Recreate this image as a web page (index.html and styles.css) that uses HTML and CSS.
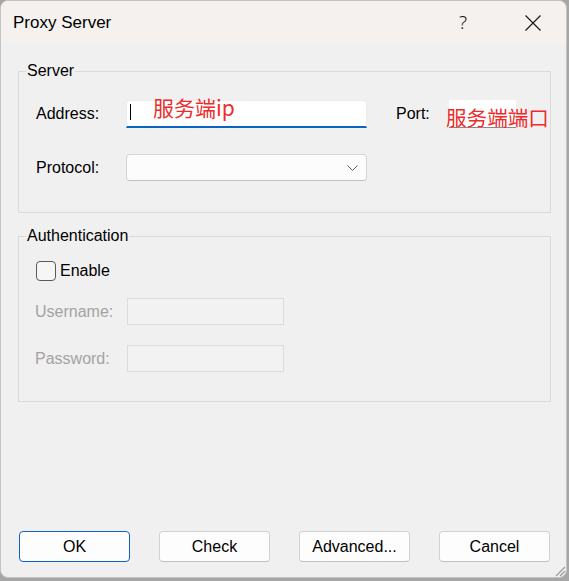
FILE: index.html
```html
<!DOCTYPE html>
<html lang="en">
<head>
<meta charset="utf-8">
<title>Proxy Server</title>
<link rel="stylesheet" href="styles.css">
</head>
<body>
<div class="window">
  <div class="titlebar">
    <span class="title">Proxy Server</span>
    <span class="cap-btn help">?</span>
    <span class="cap-btn close">
      <svg width="16" height="16" viewBox="0 0 16 16"><path d="M0.5 0.5 L15.5 15.5 M15.5 0.5 L0.5 15.5" stroke="#1a1a1a" stroke-width="1.2" fill="none"/></svg>
    </span>
  </div>
  <div class="content">
    <fieldset class="group server">
      <legend>Server</legend>
      <div class="row addr-row">
        <span class="lbl">Address:</span>
        <div class="edit address"><span class="caret"></span><span class="note note-ip">服务端ip</span></div>
        <span class="lbl port-lbl">Port:</span>
        <div class="edit port"><span class="note note-port">服务端端口</span></div>
      </div>
      <div class="row proto-row">
        <span class="lbl">Protocol:</span>
        <div class="combo">
          <svg class="chev" width="11" height="6" viewBox="0 0 11 6"><path d="M0.5 0.5 L5.5 5.5 L10.5 0.5" stroke="#5a5a5a" stroke-width="1" fill="none"/></svg>
        </div>
      </div>
    </fieldset>
    <fieldset class="group auth">
      <legend>Authentication</legend>
      <div class="check-row">
        <span class="checkbox"></span>
        <span class="check-text">Enable</span>
      </div>
      <div class="row dis-row user-row">
        <span class="lbl dis-lbl">Username:</span>
        <div class="edit disabled"></div>
      </div>
      <div class="row dis-row pass-row">
        <span class="lbl dis-lbl">Password:</span>
        <div class="edit disabled"></div>
      </div>
    </fieldset>
    <div class="buttons">
      <button class="btn default">OK</button>
      <button class="btn">Check</button>
      <button class="btn">Advanced...</button>
      <button class="btn">Cancel</button>
    </div>
  </div>
  <svg class="grip" width="12" height="12" viewBox="0 0 12 12"><path d="M11 2 L2 11 M11 6 L6 11 M11 10 L10 11" stroke="#9a9a9a" stroke-width="1.2" fill="none"/></svg>
</div>
</body>
</html>
```

FILE: styles.css
```css
html, body {
  margin: 0;
  padding: 0;
  background: #a6a6a6;
  width: 569px;
  height: 581px;
  overflow: hidden;
}

body {
  font-family: "Liberation Sans", "Noto Sans CJK SC", sans-serif;
  font-size: 16px;
  color: #000;
}

.window {
  position: relative;
  width: 565px;
  height: 576px;
  border: 1px solid #c4c4c4;
  border-radius: 8px;
  background: #f0f0f0;
  overflow: hidden;
  display: flex;
  flex-direction: column;
}

.titlebar {
  height: 43px;
  flex: none;
  background: #f4f1ee;
  display: flex;
  align-items: center;
  padding: 0 10px 0 12px;
}

.title {
  flex: 1;
  font-size: 17px;
  line-height: 20px;
  padding-top: 1px;
}

.cap-btn {
  width: 46px;
  height: 43px;
  display: flex;
  align-items: center;
  justify-content: center;
}

.help {
  font-family: "Noto Sans", sans-serif;
  font-weight: 300;
  font-size: 19px;
  color: #1a1a1a;
  margin-right: 24px;
  padding-bottom: 1px;
}

.close svg { display: block; }

.content {
  flex: 1;
  display: flex;
  flex-direction: column;
  padding: 17px 15px 15px 17px;
}

.group {
  margin: 0;
  border: 1px solid #dadada;
  padding: 0 0 0 7px;
  min-inline-size: 0;
}

.group legend {
  padding: 0 1px;
  font-size: 16px;
  line-height: 20px;
}

.row {
  display: flex;
  align-items: center;
  margin-left: 10px;
  position: relative;
}

.lbl {
  width: 90px;
  flex: none;
}

.server { padding-bottom: 31px; }
.addr-row { margin-top: 19px; height: 28px; }
.proto-row { margin-top: 26px; height: 27px; }

.edit {
  position: relative;
  box-sizing: border-box;
  background: #fff;
}

.address {
  width: 241px;
  height: 28px;
  border: 1px solid #ececec;
  border-bottom: 2px solid #0a64c0;
  border-radius: 4px 4px 0 0;
}

.caret {
  position: absolute;
  left: 3px;
  top: 3px;
  width: 1px;
  height: 16px;
  background: #000;
}

.port-lbl {
  width: 53px;
  margin-left: 29px;
}

.port {
  width: 67px;
  height: 28px;
  border-bottom: 1px solid #8a8a8a;
}

.note {
  position: absolute;
  white-space: nowrap;
  color: #ee2b2b;
  font-family: "Noto Sans CJK SC", sans-serif;
  line-height: 22px;
}

.note-ip {
  left: 26px;
  top: -5px;
  font-size: 21px;
}

.note-port {
  left: -3px;
  top: 6px;
  font-size: 20.6px;
}

.combo {
  position: relative;
  box-sizing: border-box;
  width: 241px;
  height: 27px;
  background: #fcfcfc;
  border: 1px solid #d4d4d4;
  border-bottom-color: #c2c2c2;
  border-radius: 4px;
}

.chev {
  position: absolute;
  right: 8px;
  top: 10px;
}

.auth {
  margin-top: 13px;
  padding-bottom: 29px;
}

.check-row {
  display: flex;
  align-items: center;
  margin: 15px 0 0 10px;
  height: 20px;
}

.checkbox {
  box-sizing: border-box;
  width: 20px;
  height: 20px;
  border: 1px solid #5a5a5a;
  border-radius: 4px;
  background: #f6f6f6;
  margin-right: 4px;
}

.dis-row { margin-left: 9px; height: 27px; }
.user-row { margin-top: 17px; }
.pass-row { margin-top: 20px; }

.dis-lbl {
  width: 92px;
  color: #a3a3a3;
}

.disabled {
  width: 157px;
  height: 27px;
  background: #f2f2f2;
  border: 1px solid #dcdcdc;
}

.buttons {
  margin: auto 0 0 1px;
  display: flex;
  gap: 29px;
}

.btn {
  box-sizing: border-box;
  width: 111px;
  height: 31px;
  background: #fdfdfd;
  border: 1px solid #d2d2d2;
  border-bottom-color: #c0c0c0;
  border-radius: 4px;
  font-family: "Liberation Sans", sans-serif;
  font-size: 16px;
  color: #000;
  padding: 0;
}

.btn.default {
  border: 1px solid #0a64c0;
}

.grip {
  position: absolute;
  right: 0;
  bottom: 0;
}
```
